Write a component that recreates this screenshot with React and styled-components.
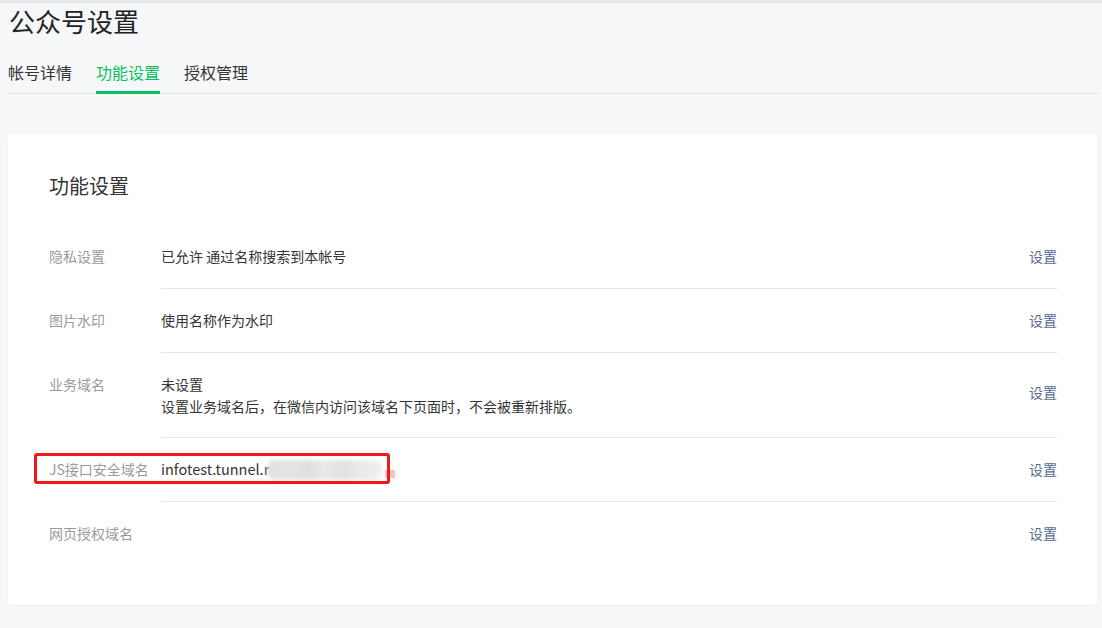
import React from "react";
import styled, { createGlobalStyle } from "styled-components";

const GlobalStyle = createGlobalStyle`
  html, body {
    margin: 0;
    padding: 0;
    background: #f6f7f9;
    font-family: "Noto Sans CJK SC", "Noto Sans", "Liberation Sans", sans-serif;
    color: #353535;
  }
`;

const Page = styled.div`
  border-top: 3px solid #e7e8ea;
  padding: 0 5px 24px 8px;
`;

const PageTitle = styled.h1`
  margin: 0 0 0 1px;
  font-size: 26px;
  font-weight: 400;
  line-height: 36px;
  color: #222;
`;

const Tabs = styled.div`
  display: flex;
  gap: 24px;
  margin-top: 15px;
  border-bottom: 1px solid #e0e1e3;
`;

const Tab = styled.div`
  font-size: 16px;
  line-height: 37px;
  height: 37px;
  margin-bottom: -1px;
  border-bottom: 3px solid ${(p) => (p.$active ? "#07c160" : "transparent")};
  color: ${(p) => (p.$active ? "#07c160" : "#353535")};
  cursor: pointer;
`;

const Card = styled.div`
  margin-top: 40px;
  background: #fff;
  border-radius: 4px;
  box-shadow: 0 1px 2px rgba(0, 0, 0, 0.03);
  padding: 38px 40px 40px 41px;
`;

const CardTitle = styled.h2`
  margin: 0 0 25px;
  font-size: 20px;
  font-weight: 400;
  line-height: 28px;
  color: #353535;
`;

const Row = styled.div`
  position: relative;
  display: flex;
  font-size: 14px;
  line-height: 22px;
`;

const Label = styled.div`
  width: 112px;
  flex-shrink: 0;
  padding: 20px 0 21px;
  color: #9a9a9a;
`;

const Body = styled.div`
  flex: 1;
  display: flex;
  align-items: center;
  padding: 20px 0 ${(p) => (p.$tall ? "20px" : "21px")};
  border-bottom: ${(p) => (p.$last ? "none" : "1px solid #e7e7eb")};
`;

const Value = styled.div`
  flex: 1;
  height: ${(p) => (p.$latin ? "22px" : "auto")};
  color: #353535;
  font-size: ${(p) => (p.$latin ? "14.5px" : "14px")};
  line-height: 22px;
  white-space: nowrap;
`;

const Action = styled.a`
  color: #576b95;
  text-decoration: none;
  cursor: pointer;
  margin-top: ${(p) => (p.$up ? "-6px" : "0")};
`;

const Blur = styled.span`
  display: inline-block;
  vertical-align: -5px;
  width: 116px;
  height: 20px;
  margin-left: -2px;
  background: linear-gradient(
    90deg,
    #dcdcdc 0%,
    #e2e2e2 20%,
    #dbdbdb 35%,
    #e6e8ea 50%,
    #dedede 65%,
    #e8e8e8 80%,
    #f0f0f0 100%
  );
  filter: blur(2px);
  border-radius: 8px;
  opacity: 0.9;
`;

const Pink = styled.span`
  display: inline-block;
  vertical-align: -3px;
  width: 10px;
  height: 8px;
  margin-left: 2px;
  background: #f7c2c2;
`;

const Highlight = styled.div`
  position: absolute;
  left: -15px;
  top: 15px;
  width: 350px;
  height: 25px;
  border: 3px solid #f01818;
  border-radius: 3px;
  pointer-events: none;
`;

const rows = [
  { label: "隐私设置", value: "已允许 通过名称搜索到本帐号" },
  { label: "图片水印", value: "使用名称作为水印" },
  {
    label: "业务域名",
    value: (
      <>
        未设置
        <br />
        设置业务域名后，在微信内访问该域名下页面时，不会被重新排版。
      </>
    ),
    up: true,
  },
  {
    label: "JS接口安全域名",
    value: (
      <>
        infotest.tunnel.r
        <Blur />
        <Pink />
      </>
    ),
    latin: true,
    marked: true,
  },
  { label: "网页授权域名", value: "" },
];

export default function App() {
  return (
    <>
      <GlobalStyle />
      <Page>
        <PageTitle>公众号设置</PageTitle>
        <Tabs>
          <Tab>帐号详情</Tab>
          <Tab $active>功能设置</Tab>
          <Tab>授权管理</Tab>
        </Tabs>
        <Card>
          <CardTitle>功能设置</CardTitle>
          {rows.map((r, i) => (
            <Row key={r.label}>
              <Label>{r.label}</Label>
              <Body $last={i === rows.length - 1} $tall={r.up}>
                <Value $latin={r.latin}>{r.value}</Value>
                <Action $up={r.up}>设置</Action>
              </Body>
              {r.marked && <Highlight />}
            </Row>
          ))}
        </Card>
      </Page>
    </>
  );
}
